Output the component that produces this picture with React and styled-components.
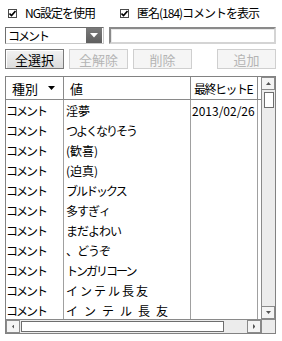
import React from 'react';
import styled, { createGlobalStyle } from 'styled-components';

const GlobalStyle = createGlobalStyle`
  html, body {
    margin: 0;
    padding: 0;
    background: #ffffff;
  }
  body {
    font-family: "Noto Sans CJK JP", "Liberation Sans", sans-serif;
    font-size: 12px;
    color: #000;
  }
`;

const Panel = styled.div`
  width: 282px;
  height: 341px;
  box-sizing: border-box;
  padding: 7px 6px 0 5px;
  display: flex;
  flex-direction: column;
`;

const CheckRow = styled.div`
  display: flex;
  align-items: center;
  height: 12px;
  padding-left: 3px;
`;

const CheckLabel = styled.label`
  display: flex;
  align-items: center;
  width: ${p => p.$w || 'auto'};
  gap: 6px;
  line-height: 12px;
  white-space: nowrap;
  letter-spacing: -1px;
`;

const Box = styled.span`
  width: 9px;
  height: 9px;
  box-sizing: border-box;
  border: 1px solid #4a4a4a;
  background: #fff;
  display: flex;
  align-items: center;
  justify-content: center;
  margin-right: 2px;
`;

const InputRow = styled.div`
  display: flex;
  gap: 5px;
  margin-top: 8px;
  height: 17px;
`;

const Combo = styled.div`
  width: 99px;
  box-sizing: border-box;
  border: 1px solid #6e6e6e;
  border-right-color: #c8c8c8;
  border-bottom-color: #c8c8c8;
  display: flex;
  align-items: center;
  padding: 1px 1px 1px 2px;
`;

const ComboText = styled.span`
  flex: 1;
  line-height: 14px;
  letter-spacing: -2px;
`;

const ComboButton = styled.span`
  width: 16px;
  height: 15px;
  background: linear-gradient(#7a7a7a, #5e5e5e);
  display: flex;
  align-items: center;
  justify-content: center;
`;

const TextBox = styled.div`
  flex: 1;
  box-sizing: border-box;
  border: 2px solid #8a8a8a;
  border-right-color: #d4d4d4;
  border-bottom-color: #d4d4d4;
  background: #fff;
  box-shadow: inset 1px 1px 0 #e8e8e8;
`;

const ButtonRow = styled.div`
  display: flex;
  gap: 5px;
  margin-top: 5px;
  height: 20px;
`;

const Button = styled.div`
  width: 59px;
  box-sizing: border-box;
  display: flex;
  align-items: center;
  justify-content: center;
  font-size: 13px;
  line-height: 13px;
  margin-left: ${p => (p.$push ? 'auto' : '0')};
  border: 1px solid ${p => (p.$disabled ? '#cfcfcf' : '#7a7a7a')};
  color: ${p => (p.$disabled ? '#b4b4b4' : '#000')};
  background: ${p => (p.$disabled ? '#f5f5f5' : 'linear-gradient(#f2f2f2, #dcdcdc)')};
  box-shadow: ${p => (p.$disabled ? 'none' : 'inset 1px 1px 0 #fff')};
`;

const ListBox = styled.div`
  margin-top: 7px;
  height: 258px;
  box-sizing: border-box;
  border: 1px solid #828282;
  display: grid;
  grid-template-columns: 1fr 14px;
  grid-template-rows: 1fr 14px;
  overflow: hidden;
`;

const Table = styled.div`
  overflow: hidden;
  display: flex;
  flex-direction: column;
`;

const HeaderRow = styled.div`
  display: grid;
  grid-template-columns: 58px 127px 67px;
  height: 23px;
  flex: none;
  border-bottom: 1px solid #8a8a8a;
  box-sizing: border-box;
`;

const HeadCell = styled.div`
  border-right: 1px solid #8a8a8a;
  display: flex;
  align-items: center;
  padding-left: ${p => p.$pad || 4}px;
  gap: 10px;
  font-size: ${p => p.$size || 13}px;
  white-space: nowrap;
  overflow: hidden;
  letter-spacing: ${p => p.$spread || 0}px;
`;

const Row = styled.div`
  display: grid;
  grid-template-columns: 58px 127px 67px;
  height: 20px;
  flex: none;
`;

const Cell = styled.div`
  border-right: 1px solid #a0a0a0;
  display: flex;
  align-items: center;
  padding-left: ${p => p.$pad || 0}px;
  white-space: nowrap;
  overflow: hidden;
  letter-spacing: ${p => (p.$spread !== undefined ? p.$spread : -2)}px;
`;

const VScroll = styled.div`
  background: #ececec;
  border-left: 1px solid #8a8a8a;
  display: flex;
  flex-direction: column;
`;

const ScrollBtn = styled.div`
  height: ${p => p.$h || 13}px;
  width: ${p => p.$w || 'auto'};
  box-sizing: border-box;
  background: #f4f4f4;
  border: 1px solid #8a8a8a;
  border-left: ${p => (p.$noLeft ? 'none' : '1px solid #8a8a8a')};
  display: flex;
  align-items: center;
  justify-content: center;
  flex: none;
`;

const VThumb = styled.div`
  margin: 2px 1px 0 2px;
  height: 16px;
  box-sizing: border-box;
  border: 1px solid #6e6e6e;
  background: #fff;
`;

const Spacer = styled.div`
  flex: 1;
`;

const HScroll = styled.div`
  background: #ececec;
  border-top: 1px solid #8a8a8a;
  display: flex;
  align-items: stretch;
`;

const HThumb = styled.div`
  width: 203px;
  margin: 1px 0 1px 1px;
  box-sizing: border-box;
  border: 1px solid #6e6e6e;
  background: #fff;
`;

const Corner = styled.div`
  background: #ececec;
  border-top: 1px solid #8a8a8a;
  border-left: 1px solid #8a8a8a;
`;

const Check = () => (
  <svg width="7" height="7" viewBox="0 0 7 7">
    <path d="M0.5 3.5 L2.5 5.5 L6.5 1" stroke="#000" strokeWidth="1.6" fill="none" />
  </svg>
);

const Tri = ({ dir = 'down', color = '#555', size = 5 }) => {
  const pts = {
    down: `0,0 ${size},0 ${size / 2},${size / 2 + 0.5}`,
    up: `0,${size / 2 + 0.5} ${size},${size / 2 + 0.5} ${size / 2},0`,
    left: `${size / 2},0 ${size / 2},${size} 0,${size / 2}`,
    right: `0,0 0,${size} ${size / 2},${size / 2}`,
  }[dir];
  const w = dir === 'left' || dir === 'right' ? size / 2 : size;
  const h = dir === 'left' || dir === 'right' ? size : size / 2 + 0.5;
  return (
    <svg width={w} height={h} viewBox={`0 0 ${w} ${h}`}>
      <polygon points={pts} fill={color} />
    </svg>
  );
};

const rows = [
  { v: '淫夢', d: '2013/02/26', s: 0 },
  { v: 'つよくなりそう' },
  { v: '(歓喜)', s: 0 },
  { v: '(迫真)', s: 0 },
  { v: 'ブルドックス' },
  { v: '多すぎィ', s: -1 },
  { v: 'まだよわい', s: -1 },
  { v: '、どうぞ', s: -1 },
  { v: 'トンガリコーン' },
  { v: 'インテル長友', s: 2 },
  { v: 'インテル長友', s: 6 },
];

export default function App() {
  return (
    <Panel>
      <GlobalStyle />
      <CheckRow>
        <CheckLabel $w="112px"><Box><Check /></Box>NG設定を使用</CheckLabel>
        <CheckLabel><Box><Check /></Box>匿名(184)コメントを表示</CheckLabel>
      </CheckRow>

      <InputRow>
        <Combo>
          <ComboText>コメント</ComboText>
          <ComboButton><Tri color="#fff" size={8} /></ComboButton>
        </Combo>
        <TextBox />
      </InputRow>

      <ButtonRow>
        <Button>全選択</Button>
        <Button $disabled>全解除</Button>
        <Button $disabled>削除</Button>
        <Button $disabled $push>追加</Button>
      </ButtonRow>

      <ListBox>
        <Table>
          <HeaderRow>
            <HeadCell $pad={6}>種別<Tri color="#000" size={7} /></HeadCell>
            <HeadCell $pad={6}>値</HeadCell>
            <HeadCell $pad={3} $size={12} $spread={-1.5}>最終ヒットE</HeadCell>
          </HeaderRow>
          {rows.map((r, i) => (
            <Row key={i}>
              <Cell>コメント</Cell>
              <Cell $pad={2} $spread={r.s}>{r.v}</Cell>
              <Cell $pad={1} $spread={0}>{r.d || ''}</Cell>
            </Row>
          ))}
        </Table>
        <VScroll>
          <ScrollBtn $noLeft><Tri dir="up" size={5} /></ScrollBtn>
          <VThumb />
          <Spacer />
          <ScrollBtn $noLeft><Tri dir="down" size={5} /></ScrollBtn>
        </VScroll>
        <HScroll>
          <ScrollBtn $w="14px" $h={13}><Tri dir="left" size={5} /></ScrollBtn>
          <HThumb />
          <Spacer />
          <ScrollBtn $w="14px" $h={13}><Tri dir="right" size={5} /></ScrollBtn>
        </HScroll>
        <Corner />
      </ListBox>
    </Panel>
  );
}
